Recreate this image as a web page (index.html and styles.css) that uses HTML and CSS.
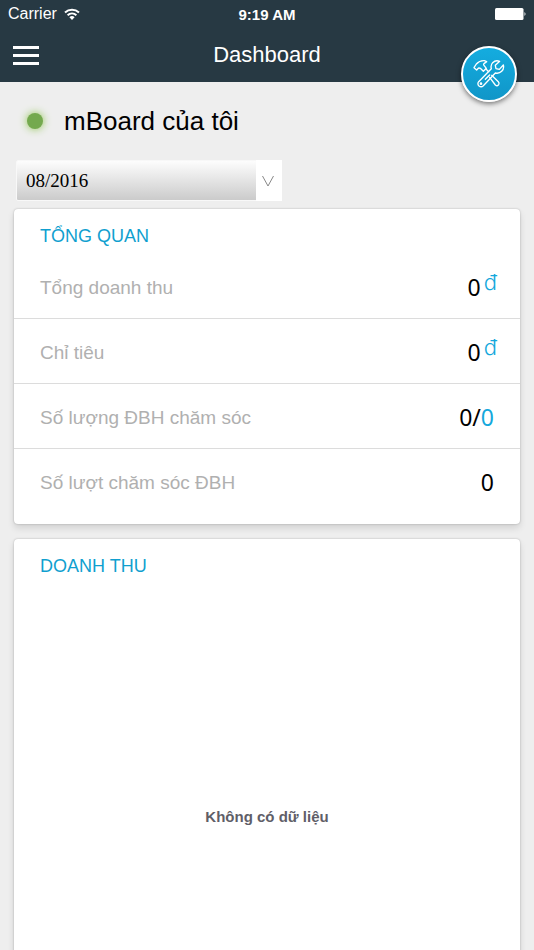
FILE: index.html
```
<!DOCTYPE html>
<html lang="vi">
<head>
  <meta charset="utf-8" />
  <meta name="viewport" content="width=device-width, initial-scale=1" />
  <title>Dashboard</title>
  <link rel="stylesheet" href="styles.css">
</head>
<body>
<div class="app">
  <header class="header">
    <div class="status-bar">
      <div class="carrier">
        Carrier
        <svg class="wifi" viewBox="0 0 16 12" aria-hidden="true">
          <path d="M1 4.4a10.4 10.4 0 0 1 14 0M3.6 7.2a6.6 6.6 0 0 1 8.8 0" />
          <path class="wifi-dot" d="M8 12 5.4 9.2a4 4 0 0 1 5.2 0z" />
        </svg>
      </div>
      <div class="clock">9:19 AM</div>
      <svg class="battery" viewBox="0 0 31 12" aria-hidden="true">
        <rect x="0" y="0" width="28.5" height="12" rx="1.5" />
        <path d="M29.5 4q2 2 0 4z" />
      </svg>
    </div>
    <div class="nav-bar">
      <button class="menu-button" type="button" aria-label="Menu">
        <span></span><span></span><span></span>
      </button>
      <h1 class="title">Dashboard</h1>
    </div>
    <button class="tools-button" type="button" aria-label="Tools">
      <svg viewBox="100 90 96 90" aria-hidden="true">
        <!-- hammer -->
        <path d="M103 116l7-11q10-11 24-10l7 3-7 5q-4 3-1 6l7 9-9 9-9-9q-5-3-8 2l-3 3z" />
        <path d="M139 120l8 8M150 145l17 23q6 5 10-1 3-5-1-9l-20-19" />
        <!-- wrench -->
        <path d="M180 97q-12-5-21 4-7 8-4 18l-38 39q-5 7 1 13 7 5 13-1l36-38q11 3 19-5 8-8 5-19l-12 13-10-2-2-10z" />
        <path d="M137 151l13-13" />
        <circle cx="124" cy="164" r="2" />
      </svg>
    </button>
  </header>

  <main class="content">
    <div class="board-head">
      <span class="online-dot"></span>
      <h2 class="board-name">mBoard của tôi</h2>
    </div>

    <div class="month-picker">
      <select class="month-select" aria-label="Tháng">
        <option>08/2016</option>
      </select>
      <svg class="month-arrow" viewBox="0 0 26 41" aria-hidden="true">
        <path d="M6.5 16l5.5 10 5.5-10" />
      </svg>
    </div>

    <section class="card">
      <h3 class="card-title">TỔNG QUAN</h3>
      <dl class="stats">
        <div class="stat">
          <dt>Tổng doanh thu</dt>
          <dd class="money">0<span class="unit">đ</span></dd>
        </div>
        <div class="stat">
          <dt>Chỉ tiêu</dt>
          <dd class="money">0<span class="unit">đ</span></dd>
        </div>
        <div class="stat">
          <dt>Số lượng ĐBH chăm sóc</dt>
          <dd>0/<span class="accent">0</span></dd>
        </div>
        <div class="stat">
          <dt>Số lượt chăm sóc ĐBH</dt>
          <dd>0</dd>
        </div>
      </dl>
    </section>

    <section class="card">
      <h3 class="card-title">DOANH THU</h3>
      <div class="chart-empty">Không có dữ liệu</div>
    </section>
  </main>
</div>
</body>
</html>
```
FILE: styles.css
```
* {
  box-sizing: border-box;
}
body {
  margin: 0;
  font-family: "Liberation Sans", Arial, sans-serif;
  background: #eeeeee;
  color: #000;
}
h1, h2, h3, dl, dd {
  margin: 0;
  font-weight: 400;
}
button {
  border: 0;
  padding: 0;
  cursor: pointer;
}
.app {
  display: flex;
  flex-direction: column;
  height: 100vh;
  overflow: hidden;
}

/* Header */
.header {
  position: relative;
  flex-shrink: 0;
  background: #273943;
  color: #fff;
}
.status-bar {
  display: grid;
  grid-template-columns: 1fr auto 1fr;
  align-items: center;
  height: 28px;
  padding: 0 8px;
}
.carrier {
  display: flex;
  align-items: center;
  gap: 7px;
  font-size: 16px;
}
.wifi {
  width: 16px;
  height: 12px;
  fill: none;
  stroke: #fff;
  stroke-width: 2;
}
.wifi .wifi-dot {
  fill: #fff;
  stroke: none;
}
.clock {
  font-size: 15px;
  font-weight: 700;
}
.battery {
  justify-self: end;
  width: 31px;
  height: 12px;
  fill: #fff;
}
.nav-bar {
  display: grid;
  grid-template-columns: 1fr auto 1fr;
  align-items: center;
  height: 54px;
  padding: 0 13px;
}
.menu-button {
  display: flex;
  flex-direction: column;
  gap: 5px;
  width: 26px;
  background: none;
}
.menu-button span {
  width: 100%;
  height: 3px;
  background: #fff;
}
.title {
  font-size: 22px;
}
.tools-button {
  position: absolute;
  right: 17px;
  bottom: -20px;
  display: flex;
  align-items: center;
  justify-content: center;
  width: 56px;
  height: 56px;
  border: 2px solid #fff;
  border-radius: 50%;
  background: linear-gradient(#14acdf, #1096c8);
  box-shadow: 0 2px 5px rgba(0, 0, 0, 0.5);
}
.tools-button svg {
  width: 32px;
  height: 30px;
  fill: none;
  stroke: #fff;
  stroke-width: 4;
  stroke-linejoin: round;
  stroke-linecap: round;
}

/* Board */
.content {
  padding: 0 14px;
}
.board-head {
  display: flex;
  align-items: center;
  gap: 21px;
  height: 78px;
  padding-left: 13px;
}
.online-dot {
  width: 16px;
  height: 16px;
  border-radius: 50%;
  background: #74a94e;
  box-shadow: 0 0 8px #8bc34a;
}
.board-name {
  font-size: 26px;
}
.month-picker {
  position: relative;
  width: 266px;
  max-width: 100%;
  height: 41px;
  margin: 0 2px 8px;
}
.month-select {
  appearance: none;
  width: 100%;
  height: 100%;
  padding: 0 36px 0 9px;
  border: 1px solid #f8f8f8;
  border-radius: 2px;
  background: linear-gradient(#fdfdfd, #cbcbcb);
  font-family: "Liberation Serif", "Times New Roman", serif;
  font-size: 19px;
  color: #000;
}
.month-arrow {
  position: absolute;
  top: 0;
  right: 0;
  width: 26px;
  height: 41px;
  background: #fff;
  fill: none;
  stroke: #888;
  pointer-events: none;
}

/* Cards */
.card {
  margin-bottom: 15px;
  padding-bottom: 10px;
  border-radius: 4px;
  background: #fff;
  box-shadow: 0 0 2px rgba(0, 0, 0, 0.25), 0 4px 7px rgba(0, 0, 0, 0.12);
}
.card-title {
  padding: 16px 26px 7px;
  font-size: 18px;
  line-height: 22px;
  color: #109fcf;
}
.stat {
  display: flex;
  align-items: center;
  justify-content: space-between;
  height: 65px;
  padding: 3px 26px 0;
  border-bottom: 1px solid #dcdcdc;
}
.stat:last-child {
  border-bottom: 0;
}
.stat dt {
  font-size: 19px;
  color: #b0b0b0;
}
.stat dd {
  padding-bottom: 2px;
  font-family: "Noto Sans", sans-serif;
  font-size: 23px;
}
.stat .money {
  display: flex;
  gap: 3px;
  margin-right: -3px;
}
.unit {
  margin-top: -2px;
  font-family: Inter, sans-serif;
  font-weight: 300;
  font-size: 22px;
  line-height: 27px;
  color: #14a8dc;
}
.accent {
  color: #14a8dc;
}
.chart-empty {
  display: flex;
  align-items: center;
  justify-content: center;
  height: 465px;
  font-size: 15px;
  font-weight: 700;
  color: #5f5e68;
}
```
